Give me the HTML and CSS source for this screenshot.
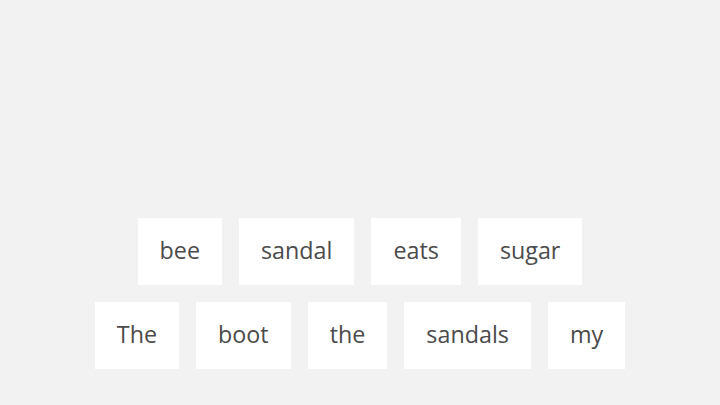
FILE: index.html
```html
<!DOCTYPE html>
<html lang="en">
<head>
<meta charset="utf-8">
<title>Word bank</title>
<link rel="stylesheet" href="styles.css">
</head>
<body>
<main class="bank">
  <div class="row">
    <span class="tile">bee</span>
    <span class="tile">sandal</span>
    <span class="tile">eats</span>
    <span class="tile">sugar</span>
  </div>
  <div class="row">
    <span class="tile">The</span>
    <span class="tile">boot</span>
    <span class="tile">the</span>
    <span class="tile">sandals</span>
    <span class="tile">my</span>
  </div>
</main>
</body>
</html>
```

FILE: styles.css
```css
html, body {
  margin: 0;
  padding: 0;
  width: 720px;
  height: 405px;
  background: #f2f2f2;
  overflow: hidden;
}
.bank {
  display: flex;
  flex-direction: column;
  align-items: center;
  gap: 17px;
  padding-top: 218px;
}
.row {
  display: flex;
  gap: 17px;
  justify-content: center;
}
.tile {
  display: flex;
  align-items: center;
  justify-content: center;
  box-sizing: border-box;
  height: 67px;
  padding: 0 22px 4px;
  background: #ffffff;
  color: #4b4b4b;
  font-family: "Open Sans", sans-serif;
  font-size: 23.3px;
  font-weight: 400;
}
```
